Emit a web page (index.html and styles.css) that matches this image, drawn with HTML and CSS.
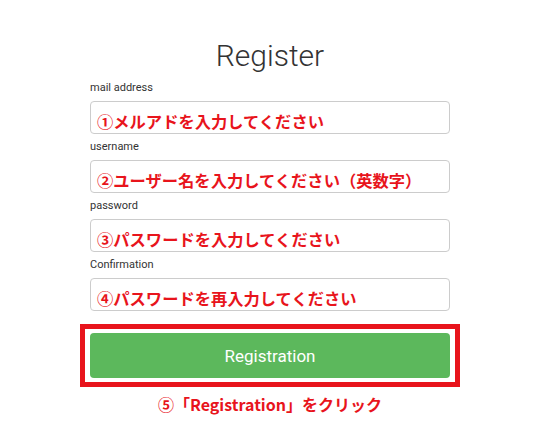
FILE: index.html
```html
<!DOCTYPE html>
<html lang="ja">
<head>
    <meta charset="UTF-8">
    <meta name="viewport" content="width=device-width, initial-scale=1.0">
    <title>Register</title>
    <link rel="stylesheet" href="styles.css">
</head>
<body>
    <div class="register">
        <h1>Register</h1>
        <form id="registerForm">
            <div class="field">
                <label>mail address</label>
                <div class="box">①メルアドを入力してください</div>
            </div>
            <div class="field">
                <label>username</label>
                <div class="box">②ユーザー名を入力してください（英数字）</div>
            </div>
            <div class="field">
                <label>password</label>
                <div class="box">③パスワードを入力してください</div>
            </div>
            <div class="field">
                <label>Confirmation</label>
                <div class="box">④パスワードを再入力してください</div>
            </div>
            <div class="highlight">
                <button type="button" class="register-btn">Registration</button>
            </div>
            <p class="note">⑤「Registration」をクリック</p>
        </form>
    </div>
</body>
</html>
```

FILE: styles.css
```css
/* register form */
body {
    margin: 0;
    background: #fff;
    font-family: Roboto, "Liberation Sans", sans-serif;
}
.register {
    width: 360px;
    margin-left: 90px;
}
.register h1 {
    margin: 38px 0 7px;
    font-size: 30px;
    font-weight: 300;
    line-height: 36px;
    text-align: center;
    color: #333;
}
.field {
    margin-bottom: 6px;
}
.field label {
    display: block;
    font-size: 11px;
    line-height: 14px;
    color: #333;
    margin-bottom: 6px;
}
.box {
    box-sizing: border-box;
    height: 33px;
    padding: 8px 0 0 6px;
    border: 1px solid #ccc;
    border-radius: 4px;
    font-family: "Noto Sans CJK JP", sans-serif;
    font-weight: bold;
    font-size: 16.3px;
    line-height: 22px;
    color: #e8141c;
    white-space: nowrap;
}
.highlight {
    margin: 13px -10px 0;
    padding: 4px 5px;
    border: 5px solid #e8141c;
}
.register-btn {
    display: block;
    width: 100%;
    height: 45px;
    background-color: #5cb85c;
    color: #fff;
    border: none;
    border-radius: 4px;
    font-family: Roboto, sans-serif;
    font-size: 17px;
    cursor: pointer;
}
.note {
    margin: 5px 0 0;
    text-align: center;
    font-family: "Noto Sans CJK JP", sans-serif;
    font-weight: bold;
    font-size: 16px;
    color: #e8141c;
}
```
